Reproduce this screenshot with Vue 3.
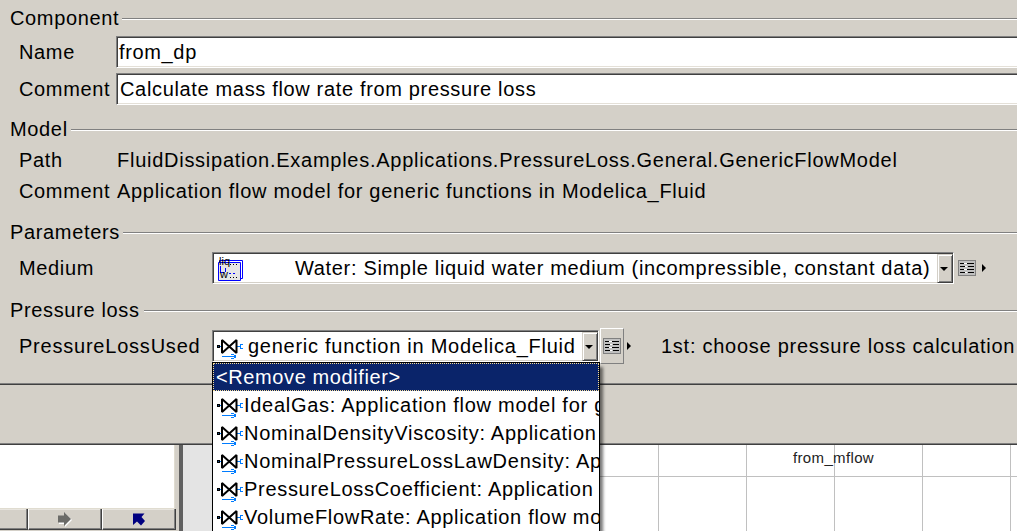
<script setup>
const items = [
  { t: 'IdealGas: Application flow model for generic function', c: 'i1' },
  { t: 'NominalDensityViscosity: Application', c: 'i2' },
  { t: 'NominalPressureLossLawDensity: Application', c: 'i3' },
  { t: 'PressureLossCoefficient: Application', c: 'i4' },
  { t: 'VolumeFlowRate: Application flow model', c: 'i5' }
]
</script>

<template>
  <div class="window">
    <svg width="0" height="0" class="defs">
      <symbol id="valve" viewBox="0 0 27 25">
        <g shape-rendering="crispEdges">
          <path d="M3 12.500H5M21 12.500H24" stroke="#007cff" />
          <rect x="1.500" y="11.500" width="2" height="2" fill="#0a4a8c" stroke="#000" />
          <path d="M27 10.500H24.500V14.500H27M6 22.500H20M15 20.500H18M18 21.500H20M18 23.500H20M15 24.500H18" fill="none" stroke="#007cff" />
        </g>
        <path d="M6 6V19L20.500 6V19Z" fill="#fff" stroke="#000" stroke-width="2" stroke-linejoin="bevel" />
      </symbol>
      <symbol id="list" viewBox="0 0 18 16">
        <rect x=".5" y=".5" width="17" height="15" fill="#c0c0c0" stroke="#808080" />
        <path d="M6 3.500H9M6 6.500H9M6 9.500H9M6 12.500H9" stroke="#fff" />
        <path d="M2 3.500H6M9 3.500H16M2 6.500H7M10 6.500H16M2 9.500H6M9 9.500H16M2 12.500H7M10 12.500H16" stroke="#000" />
      </symbol>
    </svg>

    <section class="form">
      <div class="legend g1"><span>Component</span><i></i></div>
      <div class="row r1"><label>Name</label><div class="input"><span class="fd">from_dp</span></div></div>
      <div class="row r2"><label>Comment</label><div class="input"><span class="calc">Calculate mass flow rate from pressure loss</span></div></div>
      <div class="legend g2"><span>Model</span><i></i></div>
      <div class="row r3"><label>Path</label><span class="path">FluidDissipation.Examples.Applications.PressureLoss.General.GenericFlowModel</span></div>
      <div class="row r4"><label>Comment</label><span class="app">Application flow model for generic functions in Modelica_Fluid</span></div>
      <div class="legend g3"><span>Parameters</span><i></i></div>
      <div class="row r5">
        <label class="wide">Medium</label>
        <div class="combo medium">
          <svg class="water" width="27" height="28" viewBox="0 0 27 28">
            <path d="M2.500 8.500V6.500H25.500V24.500H23.500" fill="none" stroke="#00f" />
            <path d="M1.500 8.500H23.500V26.500H1.500Z" fill="#e6e6e6" stroke="#00f" />
            <path d="M3.500 12V18.500H7M8.500 14V18M12 19.500H14M16 19.500H18" fill="none" stroke="#00f" />
            <path d="M13 10.500H14M16 10.500H17M19 10.500H20M13 23.500H14M16 23.500H17M19 23.500H20" stroke="#000" />
            <text x="2" y="11">liq</text><text x="3" y="24">w</text>
          </svg>
          <span class="med">Water: Simple liquid water medium (incompressible, constant data)</span>
          <b class="drop"></b>
        </div>
        <svg class="list one" width="18" height="16"><use href="#list" /></svg><b class="tri"></b>
      </div>
      <div class="legend g4"><span>Pressure loss</span><i></i></div>
      <div class="row r6">
        <label class="wide plu">PressureLossUsed</label>
        <div class="combo loss">
          <svg class="valve" width="27" height="25"><use href="#valve" /></svg>
          <span class="gen">generic function in Modelica_Fluid</span>
          <b class="drop"></b>
        </div>
        <div class="raised"><svg width="18" height="16"><use href="#list" /></svg></div><b class="tri"></b>
        <span class="first">1st: choose pressure loss calculation</span>
      </div>
    </section>
    <section class="band"></section>
    <section class="bottom">
      <div class="side">
        <div class="white"></div>
        <div class="buttons">
          <div class="btn b1"></div>
          <div class="btn b2"><svg width="16" height="16" viewBox="0 0 16 16"><path d="M2 6H8V2L15 9L8 16V13H2Z" fill="#fff" /><path d="M1 4.500H7V1L14 8L7 15V11.500H1Z" fill="#6b6b68" /></svg></div>
          <div class="btn b3"><svg width="16" height="16" viewBox="0 0 16 16"><path d="M2 2.500H13.500L10.500 6L14 10L10 14.500L6 10.500L2 14Z" fill="#000080" /></svg></div>
        </div>
      </div>
      <div class="gutter"></div>
      <div class="canvas"><span class="mflow">from_mflow</span></div>
    </section>

    <div class="popup">
      <div class="item sel"><span class="rem">&lt;Remove modifier&gt;</span></div>
      <div v-for="i in items" :key="i.c" class="item">
        <svg class="valve" width="27" height="25"><use href="#valve" /></svg><span :class="i.c">{{ i.t }}</span>
      </div>
    </div>
  </div>
</template>

<style>
body { overflow: hidden; }
</style>
<style scoped>
* { box-sizing: border-box; }
.window { position: relative; width: 1017px; height: 531px; overflow: hidden; background: #d4d0c8; color: #000; font: 20px/24px "Liberation Sans", Arial, sans-serif; letter-spacing: .65px; white-space: nowrap; }
.defs { position: absolute; }
svg { display: block; flex: none; }
.form { height: 385px; padding-top: 6px; border-bottom: 1px solid #404040; box-shadow: inset 0 -1px #808080; overflow: hidden; }
.legend { display: flex; height: 24px; padding-left: 10px; align-items: center; }
.legend i { flex: 1; height: 2px; margin: 2px 0 0 3px; border-top: 1px solid #808080; background: #fff; }
.row { display: flex; align-items: center; height: 32px; padding-left: 19px; }
.row > label { width: 97px; flex: none; }
.row > label.wide { width: 193px; }
.r1 { margin-top: 6px; }
.r2 { margin-top: 5px; }
.g2 { margin-top: 12px; }
.r3 { height: 24px; margin-top: 7px; }
.r4 { height: 24px; margin-top: 7px; }
.g3 { margin-top: 17px; }
.r5 { margin-top: 8px; }
.g4 { margin-top: 14px; }
.g4 i { margin-left: 4px; }
.r6 { margin-top: 8px; }
.input { flex: 1; height: 32px; padding: 3px 0 0 2px; border: 1px solid #808080; border-right: 0; border-bottom-color: #fff; box-shadow: inset 1px 1px #404040, inset 0 -1px #e4e0d8; background: #fff; }
.calc { margin-left: 1px; letter-spacing: .66px; }
.path { margin-left: 1px; letter-spacing: .735px; }
.app { margin-left: 1px; letter-spacing: .7px; }
.combo { position: relative; display: flex; height: 32px; flex: none; align-items: center; border: 1px solid #808080; border-bottom-color: #fff; border-right-color: #fff; box-shadow: inset 1px 1px #404040, inset -1px -1px #d4d0c8; background: #fff; }
.medium { width: 742px; }
.loss { width: 387px; }
.drop { position: absolute; right: 0; top: 1px; width: 16px; height: 29px; background: #d4d0c8; border: 1px solid #d4d0c8; border-right-color: #404040; border-bottom-color: #404040; box-shadow: inset 1px 1px #fff, inset -1px -1px #808080; }
.drop::after { content: ""; display: block; margin: 12px 0 0 2px; width: 0; border: 4px solid transparent; border-top-color: #000; border-bottom: 0; }
.water { margin-left: 4px; overflow: visible; }
.water text { font: 11px "Liberation Sans", sans-serif; letter-spacing: 0; }
.med { margin-left: 51px; letter-spacing: .67px; }
.valve { margin-left: 3px; }
.gen { margin-left: 5px; letter-spacing: .74px; }
.plu { letter-spacing: .78px; }
.list.one { margin-left: 4px; }
.tri { width: 0; border: 4px solid transparent; border-left-color: #000; border-right: 0; margin-left: 6px; }
.raised { width: 24px; height: 36px; margin-left: 1px; padding: 9px 0 0 2px; border: 1px solid #fff; border-right-color: #808080; border-bottom-color: #808080; }
.raised + .tri { margin-left: 3px; }
.first { margin-left: 30px; letter-spacing: .74px; }
.band { height: 60px; border-bottom: 1px solid #404040; box-shadow: inset 0 -1px #808080; }
.bottom { display: flex; height: 86px; }
.side { width: 183px; border-right: 4px solid #606060; }
.white { width: 175px; height: 64px; background: #fff; border-bottom: 1px solid #e0dcd0; border-right: 1px solid #e0dcd0; }
.buttons { display: flex; height: 22px; }
.btn { display: flex; justify-content: center; align-items: center; height: 21px; border-left: 1px solid #fff; border-right: 1px solid #404040; border-bottom: 1px solid #404040; box-shadow: inset -1px -1px #808080, inset 0 1px #e8e5df; }
.b1 { width: 28px; border-left: 0; }
.b2 { width: 74px; }
.b3 { width: 74px; }
.gutter { width: 30px; background: #e4e4e4; }
.canvas { flex: 1; background: repeating-linear-gradient(90deg, transparent 0 87px, #c0c0c0 87px 88px) 6px 0, linear-gradient(#c0c0c0, #c0c0c0) 0 31px / 100% 1px no-repeat, #fff; padding: 3px 0 0 580px; font-size: 15px; line-height: 20px; letter-spacing: .35px; color: #222; }
.popup { position: absolute; left: 212px; top: 362px; width: 388px; height: 180px; border: 1px solid #000; background: #fff; box-shadow: 4px 4px 3px -1px #0008; }
.item { display: flex; align-items: center; height: 28px; overflow: hidden; }
.sel { background: #0a246a; color: #fff; outline: 1px dotted #f5db95; outline-offset: -1px; padding-left: 3px; letter-spacing: .6px; }
.i1 { letter-spacing: .72px; }
.i2 { letter-spacing: .73px; }
.i3 { letter-spacing: .74px; }
.i4 { letter-spacing: .7px; }
.i5 { letter-spacing: .7px; }
.item > svg + span { margin-left: 1px; }
</style>
